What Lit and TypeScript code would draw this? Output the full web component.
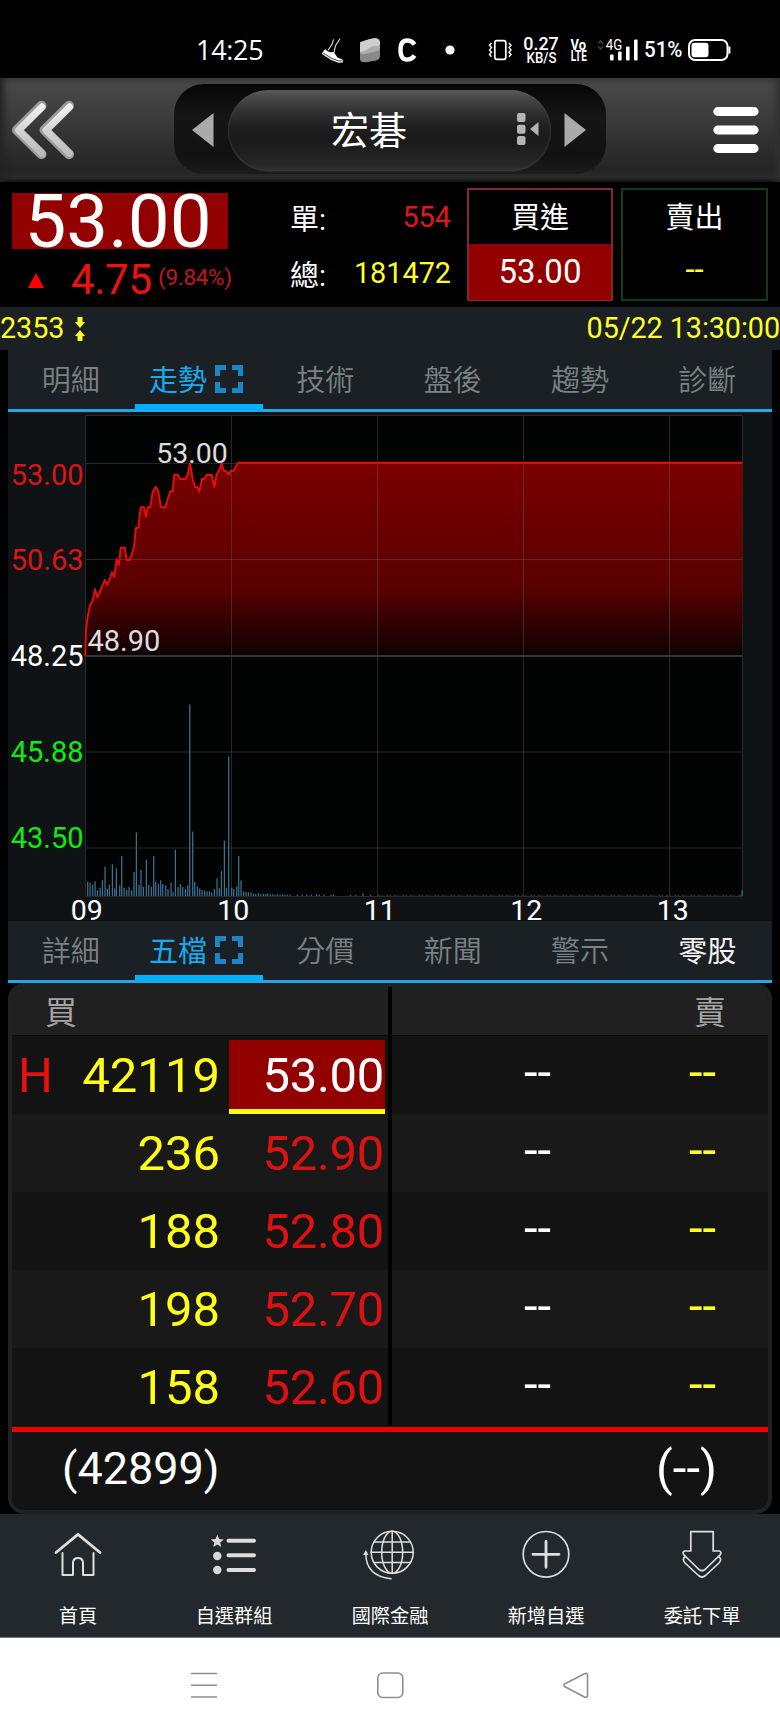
import { LitElement, html, svg, css } from "lit";
import { customElement, property } from "lit/decorators.js";
import { classMap } from "lit/directives/class-map.js";

const FONT = css`Roboto, "Noto Sans CJK TC", sans-serif`;

/* Intraday price line: [x, y] in thirds of a pixel from the plot corner. */
const PRICE: number[][] = [
  [256, 738], [258, 660], [263, 620], [270, 585], [278, 572], [285, 537], [292, 562], [298, 550],
  [306, 530], [314, 510], [322, 525], [330, 505], [336, 487], [343, 500], [350, 447], [357, 465],
  [362, 413], [374, 413], [380, 450], [388, 450], [396, 432], [402, 410], [408, 353], [415, 353],
  [422, 292], [432, 292], [438, 320], [443, 292], [451, 292], [458, 245], [467, 230], [475, 245],
  [483, 292], [496, 292], [505, 262], [511, 244], [518, 244], [523, 194], [533, 194], [541, 207],
  [556, 207], [563, 195], [570, 160], [578, 207], [585, 232], [593, 232], [598, 245], [606, 207],
  [613, 207], [620, 194], [635, 194], [643, 230], [650, 194], [657, 180], [665, 160], [671, 182],
  [680, 185], [686, 194], [692, 182], [701, 182], [714, 158.5], [2227, 158.5],
];

/* Volume bars: [x, top] in thirds of a pixel, baseline at 677. */
const VOLUME: number[][] = [
  [53, 634], [60, 637], [68, 643], [75, 633], [82, 660], [90, 652], [97, 630], [105, 589], [112, 656],
  [118, 643], [127, 582], [134, 654], [139, 594], [149, 645], [155, 557], [162, 652], [170, 659],
  [177, 650], [185, 660], [192, 605], [199, 486], [207, 643], [213, 598], [220, 650], [229, 568],
  [236, 643], [244, 650], [251, 557], [257, 635], [265, 641], [272, 630], [278, 641], [287, 645],
  [294, 656], [303, 637], [309, 666], [316, 538], [324, 650], [331, 641], [338, 650], [346, 656],
  [353, 645], [359, 102], [368, 484], [374, 635], [382, 648], [389, 654], [396, 659], [404, 660],
  [411, 663], [418, 663], [425, 666], [433, 656], [441, 624], [448, 654], [454, 602], [463, 511],
  [469, 652], [476, 258], [485, 652], [491, 656], [500, 648], [506, 557], [513, 630], [521, 663],
  [528, 665], [535, 666], [543, 666], [550, 671], [557, 671], [565, 669], [572, 672], [580, 671],
  [587, 671], [593, 669], [601, 672], [608, 672], [615, 673], [622, 672], [630, 673], [638, 672],
  [645, 673], [652, 673], [660, 673], [682, 673], [696, 673], [710, 673], [724, 673], [740, 672],
  [748, 673], [762, 673], [783, 673], [790, 673], [842, 674], [857, 674], [879, 669], [901, 674],
  [2016, 660],
];

@customElement("status-bar")
class StatusBar extends LitElement {
  static styles = css`
    :host { display: flex; align-items: center; height: 78px; padding: 22px 0 0 196px; box-sizing: border-box; background: #000; color: #fff; font-family: ${FONT}; }
    .time { font: 27px "Open Sans", "Noto Sans", sans-serif; line-height: 56px; width: 122px; letter-spacing: -0.3px; white-space: nowrap; }
    svg { display: block; flex: none; }
    text { font-family: Roboto, sans-serif; fill: #fff; }
  `;
  render() {
    return html`
      <span class="time">14:25</span>
      <svg width="462" height="56" viewBox="318 22 462 56">
        <path d="M333.500 39.300l-1.500 5-4 6M340 38.700l-4.500 7-1.500 7" fill="none" stroke="#ddd" stroke-width="1.100"/>
        <path d="M325 49.300l3 2.200q3 1.500 5.500.2l4 5.800 5 2q1.500 2 0 2.200l-4.500.1-6.500-2.800-9.300-6Z" fill="#fff"/>
        <path d="M322.300 53.500L331 59.300l7.500 2.800 4.300-.3" fill="none" stroke="#fff" stroke-width="1.200"/>
        <path d="M323.300 53L331.500 58.300l7 2.600 4-.2" fill="none" stroke="#000" stroke-width=".7"/>
        <path d="M360 52l20-5v9q0 3.500-4 4.500l-10 1.800q-6 .5-6-3.500Z" fill="#898989"/>
        <path d="M360 43.500q0-2 3-2.600l10-2.700q6-1.200 7 3.300v6q0 2.500-3 3.500l-12 3q-5 .8-5-2.500Z" fill="#adadad"/>
        <path d="M360 42.500l10-3.500q9-2 10 4-.5 3-3 3-4-.8-8 2-4 4-9 4Z" fill="#cfcfcf"/>
        <path d="M414.500 44.500Q412 40.500 407 40.500Q400.500 40.500 400.500 50T407 59.600Q412 59.600 414.500 55.500" fill="none" stroke="#fff" stroke-width="4.400"/>
        <circle cx="450" cy="50" r="4.600" fill="#fff"/>
        <g fill="none" stroke="#fff" stroke-width="1.700">
          <rect x="494.800" y="40.700" width="11" height="18.600" rx="2"/>
          <path d="M491.500 43l-2 2.300 2 2.300-2 2.300 2 2.300-2 2.300 2 2.300M509 43l2 2.300-2 2.300 2 2.300-2 2.300 2 2.300-2 2.300" stroke-width="1.400"/>
        </g>
        <text x="523.300" y="50" font-size="18" font-weight="500" textLength="35.500" lengthAdjust="spacingAndGlyphs">0.27</text>
        <text x="526.500" y="62.700" font-size="13.800" font-weight="500" textLength="30" lengthAdjust="spacingAndGlyphs">KB/S</text>
        <text x="570.500" y="49.500" font-size="13.800" font-weight="700" textLength="15.500" lengthAdjust="spacingAndGlyphs">Vo</text>
        <text x="570.800" y="60.800" font-size="14" font-weight="700" textLength="16" lengthAdjust="spacingAndGlyphs">LTE</text>
        <path d="M598 43.500l2.500-2.500 2.500 2.500M598 46.500l2.500 2.500 2.500-2.500" fill="none" stroke="#444" stroke-width="1.500"/>
        <text x="605.700" y="49.700" font-size="14.500" textLength="16.500" lengthAdjust="spacingAndGlyphs">4G</text>
        <g fill="#fff"><rect x="610" y="54.500" width="3.600" height="6" rx="1"/><rect x="618" y="51.500" width="3.600" height="9" rx="1"/><rect x="626" y="46.500" width="3.600" height="14" rx="1"/><rect x="634" y="39.500" width="3.600" height="21" rx="1"/></g>
        <text x="644" y="57" font-size="21.500" font-weight="500" textLength="38.500" lengthAdjust="spacingAndGlyphs">51%</text>
        <rect x="689" y="40" width="38.500" height="20" rx="6" fill="none" stroke="#fff" stroke-width="2"/>
        <rect x="691.500" y="42.700" width="17" height="14.600" rx="3" fill="#fff"/>
        <path d="M729.400 46.500v7" stroke="#fff" stroke-width="2"/>
      </svg>`;
  }
}

@customElement("title-bar")
class TitleBar extends LitElement {
  static styles = css`
    :host { display: flex; align-items: center; height: 104px; box-sizing: border-box; padding: 0 21px 0 9px; background: linear-gradient(#3a3a3a, #474747 7%, #3b3b3b 40%, #242424 88%, #2a2a2a 96%, #141414); box-shadow: inset 10px 0 6px -6px #242424, inset -10px 0 6px -6px #303030; }
    svg { display: block; flex: none; }
    .well { display: flex; align-items: center; justify-content: space-between; box-sizing: border-box; width: 433px; height: 90px; margin: 0 107px 3px 97px; padding: 3px 20px 0 18px; border-radius: 30px; background: linear-gradient(#050505, #151515 35%, #121212 80%, #1c1c1c); }
    .pill { display: grid; grid-template-columns: 1fr 32px; align-items: center; box-sizing: border-box; width: 323px; margin-left: 1px; height: 81px; border-radius: 41px; background: linear-gradient(#5d5d5d, #4a4a4a 8%, #303030 28%, #1d1d1d 48%, #1a1a1a 62%, #272727 92%, #303030); box-shadow: inset 0 0 2px #555, 0 1px 1px #292929; padding: 0 3px 0 0; }
    .name { color: #fff; font: 38px/52px "Noto Sans CJK TC", sans-serif; text-align: center; padding: 0 6px 4px 0; }
  `;
  render() {
    return html`
      <svg width="68" height="62" viewBox="9 99 68 62">
        <defs><linearGradient id="m" x1="0" y1="0" x2="0" y2="1"><stop offset="0" stop-color="#f0f0f0"/><stop offset="1" stop-color="#bbb"/></linearGradient></defs>
        <g fill="none" stroke-linecap="round" stroke-linejoin="round">
          <path d="M41.500 105.700L17 130l24.500 24.300M69 105.700L44.500 130 69 154.300" stroke="#999" stroke-width="10"/>
          <path d="M42 107L18.500 130.200 42 153.500M69.500 107L46 130.200 69.500 153.500" stroke="url(#m)" stroke-width="7"/>
        </g>
      </svg>
      <div class="well">
        <svg width="22" height="36" viewBox="0 0 22 36"><path d="M21.500 1v34L0 18Z" fill="#aaa"/></svg>
        <div class="pill">
          <span class="name">宏碁</span>
          <svg width="24" height="34" viewBox="0 0 24 34" fill="#b4b4b4">
            <rect x="1" y="0" width="8.500" height="9" rx="2"/><rect x="1" y="11.700" width="8.500" height="9" rx="2"/><rect x="1" y="23" width="8.500" height="9" rx="2"/>
            <path d="M22.500 9v14L14 16Z"/>
          </svg>
        </div>
        <svg width="22" height="36" viewBox="0 0 22 36"><path d="M.5 1v34L22 18Z" fill="#aaa"/></svg>
      </div>
      <svg width="46" height="50" viewBox="713.500 105 46 50"><path d="M718.200 111.500h36.500M718.200 130h36.500M718.200 148.500h36.500" stroke="#fff" stroke-width="8.800" stroke-linecap="round"/></svg>`;
  }
}

@customElement("quote-panel")
class QuotePanel extends LitElement {
  static styles = css`
    :host { display: block; background: #000; font-family: ${FONT}; color: #fff; }
    .quote { display: grid; grid-template-columns: 216px 161px 146px 147px; column-gap: 0; height: 125px; box-sizing: border-box; padding: 6px 12px 6px 12px; }
    .last { margin-top: 5px; height: 56px; line-height: 57px; background: #930000; font-size: 74.5px; text-align: center; white-space: nowrap; padding-right: 4px; box-sizing: border-box; }
    .change { display: flex; align-items: center; color: #f01010; height: 54px; line-height: 44px; padding-top: 8px; box-sizing: border-box; white-space: nowrap; }
    .change > * { flex: none; }
    .tri { font-size: 0; line-height: 0; width: 59px; padding: 0 0 0 16px; box-sizing: border-box; }
    .amount { font-size: 42px; width: 87px; letter-spacing: -0.3px; }
    .pct { font-size: 22.500px; color: #c01818; letter-spacing: -0.3px; line-height: 24px; margin-top: -6px; }
    .sums { margin: 0 0 0 62px; display: grid; grid-template-rows: 57px 56px; width: 161px; }
    .sum { display: flex; justify-content: space-between; align-items: center; font-size: 29px; }
    .sum span { font-size: 28.800px; }
    .r { color: #e01818; } .y { color: #ffff28; }
    .box { box-sizing: border-box; width: 146px; height: 113px; border: 2px solid #7c2c2c; display: grid; grid-template-rows: 54px 1fr; text-align: center; font-size: 29px; line-height: 56px; margin-left: 78px; }
    .box b { font-weight: 400; font-size: 33px; background: #930000; }
    .box.sell { border-color: #143c14; margin-left: 86px; width: 147px; }
    .box.sell b { background: none; color: #ffff28; line-height: 52px; }
    .code { display: flex; align-items: center; height: 43px; background: #1b2024; font-size: 28.800px; color: #ffff28; line-height: 40px; }
    .code svg { margin: 0 auto 0 10px; }
    .code span { letter-spacing: -0.1px; padding-bottom: 2px; }
  `;
  render() {
    return html`
      <div class="quote">
        <div>
          <div class="last">53.00</div>
          <div class="change">
            <span class="tri"><svg width="16" height="15"><path d="M8 0L16 15H0Z" fill="#f00"/></svg></span>
            <span class="amount">4.75</span><span class="pct">(9.84%)</span>
          </div>
        </div>
        <div class="sums">
          <div class="sum">單:<span class="r">554</span></div>
          <div class="sum">總:<span class="y">181472</span></div>
        </div>
        <div class="box">買進<b>53.00</b></div>
        <div class="box sell">賣出<b>--</b></div>
      </div>
      <div class="code">
        <span>2353</span>
        <svg width="12" height="26" viewBox="0 0 12 26" fill="#ffff28"><path d="M3.500 1h5v5h2.500L6 12 1 6h2.500ZM3.500 25h5v-5h2.500L6 14 1 20h2.500Z"/></svg>
        <span>05/22 13:30:00</span>
      </div>`;
  }
}

@customElement("tab-strip")
class TabStrip extends LitElement {
  @property({ attribute: false }) tabs: string[] = [];
  @property({ type: Number }) active = 1;
  @property({ type: Number }) bright = -1;
  static styles = css`
    :host { display: grid; grid-template-columns: repeat(6, 1fr); height: 62px; margin: 0 8px; box-sizing: border-box; border-bottom: 3px solid #22a8e6; background: #1b2024; font-family: ${FONT}; font-size: 29px; }
    .tab { display: flex; justify-content: center; align-items: center; gap: 8px; height: 60px; box-sizing: border-box; border-bottom: 6px solid transparent; padding-right: 2px; color: #7b8285; font-weight: 350; }
    .tab.on { color: #19a9ef; border-color: #02b0ff; font-weight: 400; padding-right: 6px; }
    .tab.bright { color: #f4f4f4; font-weight: 400; }
    .label { line-height: 44px; padding-top: 7px; }
    svg { display: block; margin-top: 4px; }
  `;
  render() {
    return this.tabs.map((t, i) => html`
      <div class=${classMap({ tab: true, on: i === this.active, bright: i === this.bright })}>
        <span class="label">${t}</span>
        ${i === this.active ? html`<svg width="28" height="28"><path d="M2.500 11V2.500H11M17 2.500H25.500V11M25.500 17V25.500H17M11 25.500H2.500V17" fill="none" stroke="#1a86c8" stroke-width="5"/></svg>` : ""}
      </div>`);
  }
}

@customElement("trend-chart")
class TrendChart extends LitElement {
  static styles = css`
    :host { display: block; height: 509px; margin: 0 8px; background: #101316; }
    svg { display: block; overflow: visible; }
    text { font: 29px Roboto, sans-serif; }
    .axis { text-anchor: end; }
    .hour { font-size: 28.500px; fill: #fff; text-anchor: middle; }
    .note { font-size: 28.500px; fill: #ddd; }
    .low { font-size: 29px; }
  `;
  render() {
    const pts = PRICE.map(([x, y]) => `${(x / 3 - 8).toFixed(1)},${(y / 3 - 2).toFixed(1)}`);
    const axis: [string, number, string][] = [
      ["53.00", 72.8, "#dc1414"], ["50.63", 157.8, "#dc1414"], ["48.25", 253.5, "#fff"],
      ["45.88", 349.8, "#10ec10"], ["43.50", 435.8, "#10ec10"],
    ];
    return html`<svg width="764" height="509" viewBox="0 0 764 509">
      <defs><linearGradient id="f" x1="0" y1="0" x2="0" y2="1"><stop offset="0" stop-color="#7a0000"/><stop offset=".65" stop-color="#590000"/><stop offset="1" stop-color="#0c0202"/></linearGradient></defs>
      <rect x="77.500" y="3.500" width="657" height="481" fill="#020404" stroke="#28292a"/>
      <polygon points="${pts.join(" ")} 734.300,244 77.500,244" fill="url(#f)"/>
      <g stroke="#777" stroke-opacity=".3">
        ${[51.5, 147.5, 340, 436].map((y) => svg`<path d=${`M78 ${y}H734`}/>`)}
        ${[223.5, 369.5, 515.5, 661.5].map((x) => svg`<path d=${`M${x} 4V484`}/>`)}
      </g>
      <path d="M78 244H734" stroke="#40484e" stroke-width="1.600"/>
      <polyline points=${pts.join(" ")} fill="none" stroke="#ea0c0c" stroke-width="1.900" stroke-linejoin="round"/>
      ${VOLUME.map(([x, y]) => svg`<rect x=${(61.5 + x / 3).toFixed(1)} y=${(484 - (677 - y) / 3).toFixed(1)} width="1.100" height=${((677 - y) / 3).toFixed(1)} fill="#4080a5"/>`)}
      <path d="M370 483.500H734" stroke="#33464f" stroke-dasharray="1.500 2 1 4 2 1.500 1 3"/>
      ${axis.map(([t, y, c]) => svg`<text class="axis" x="75.500" y=${y} fill=${c}>${t}</text>`)}
      ${["09", "10", "11", "12", "13"].map((t, i) => svg`<text class="hour" x=${78.7 + i * 146.5} y="507.500">${t}</text>`)}
      <text class="note" x="148.300" y="51.300">53.00</text>
      <text class="note low" x="79.500" y="239">48.90</text>
    </svg>`;
  }
}

@customElement("order-book")
class OrderBook extends LitElement {
  static styles = css`
    :host { display: block; background: #000; font-family: ${FONT}; }
    .card { margin: 0 8px; border: 4px solid #212121; border-top-width: 0; border-radius: 16px; background: #131313; overflow: hidden; height: 531px; box-sizing: border-box; }
    .head, .row { display: grid; grid-template-columns: 35px 173px 168px 4px 225px 151px; align-items: center; }
    .head { height: 53px; background: #202020; color: #a5a5a5; font-size: 32px; border-bottom: 1px solid #0c0c0c; box-sizing: border-box; line-height: 44px; }
    .bid { grid-column: 1 / 4; padding: 8px 0 0 33px; }
    .ask { grid-column: 5 / 7; text-align: right; padding: 8px 42px 0 0; }
    .gap { background: #000; align-self: stretch; }
    .head .gap { margin-top: 4px; }
    .row { height: 78px; font-size: 49px; line-height: 76px; }
    .row:nth-child(odd) { background: #191919; }
    .h { color: #e81010; padding: 2px 0 0 6px; }
    .qty { color: #ffff18; text-align: right; padding-top: 2px; }
    .price { color: #dc1212; text-align: right; padding: 2px 4px 0 0; justify-self: end; width: 152px; letter-spacing: -0.3px; box-sizing: border-box; margin-right: 3px; }
    .price span { margin-right: -3px; }
    .price.hit { background: #930000; color: #fff; border-bottom: 5px solid #ffff10; height: 74px; padding-top: 0; line-height: 72px; align-self: end; width: 156px; }
    .d { color: #fff; padding-left: 132px; line-height: 70px; height: 74px; }
    .e { color: #ffff28; padding-left: 72px; line-height: 70px; height: 74px; }
    .total { border-top: 5px solid #f00000; margin-top: 1px; height: 83px; box-sizing: border-box; display: flex; justify-content: space-between; padding: 0 51px 0 50px; color: #fff; font-size: 45px; line-height: 74px; }
    .total .none { font-size: 49px; }
  `;
  render() {
    const rows = [["42119", "53.00"], ["236", "52.90"], ["188", "52.80"], ["198", "52.70"], ["158", "52.60"]];
    return html`<div class="card">
      <div class="head"><span class="bid">買</span><span class="gap"></span><span class="ask">賣</span></div>
      ${rows.map(([q, p], i) => html`<div class="row">
        <span class="h">${i === 0 ? "H" : ""}</span><span class="qty">${q}</span>
        <span class=${classMap({ price: true, hit: i === 0 })}><span>${p}</span></span>
        <span class="gap"></span><span class="d">--</span><span class="e">--</span>
      </div>`)}
      <div class="total"><span>(42899)</span><span class="none">(--)</span></div>
    </div>`;
  }
}

@customElement("bottom-nav")
class BottomNav extends LitElement {
  static styles = css`
    :host { display: grid; grid-template-columns: repeat(5, 1fr); height: 124px; background: #23282c; border-bottom: 1px solid #777; box-sizing: border-box; font: 19.200px/28px "Noto Sans CJK TC", sans-serif; color: #fff; }
    .item { display: flex; flex-direction: column; align-items: center; padding-top: 12px; gap: 19px; white-space: nowrap; }
    svg { display: block; fill: none; stroke: #dedede; stroke-width: 2; stroke-linejoin: round; stroke-linecap: round; }
    .solid { fill: #d8d8d8; stroke: none; }
    .thick { stroke-width: 4; }
    .thin { stroke-width: 1.500; }
  `;
  render() {
    const items = [
      ["首頁", svg`<path d="M8 26.500L30 8.300 52 26.500" stroke-width="2.800"/><path d="M14.500 27V49H25V36.500Q25.500 32 30 32T35 36.500V49H45.500V27"/>`],
      ["自選群組", svg`<path class="solid" d="M13.300 8.800l1.800 4.300 4.700.4-3.600 3 1.100 4.600-4-2.500-4 2.500 1.100-4.600-3.600-3 4.700-.4Z"/><circle class="solid" cx="13.300" cy="30" r="4.200"/><circle class="solid" cx="13.300" cy="44" r="4.200"/><path class="thick" d="M24.500 14.700H50M24.500 29.300H50M24.500 44H50"/>`],
      ["國際金融", svg`<g class="thin"><circle cx="32.200" cy="26.300" r="21"/><ellipse cx="32.200" cy="26.300" rx="10.500" ry="21"/><path d="M32.200 5.500v42M11 26.300h42.500M14 16h36.500M14 36.400h36.500M5.800 28Q6 50 31 52.800"/></g><path class="solid" d="M5.800 24l2.800 5H3Z"/>`],
      ["新增自選", svg`<circle cx="30" cy="28.300" r="22.800" stroke-width="1.700"/><path d="M30 15.300v26M17 28.300h26" stroke-width="2.800"/>`],
      ["委託下單", svg`<g stroke-width="1.700"><path d="M18.800 5.700H41.200V25H47.500Q50 26 48 29L33 43.500Q30 46 27 43.500L12 29Q10 26 12.500 25H18.800Z"/><path d="M13.500 30.500Q9.500 33 13 37L26.500 49.500Q30 52.500 33.500 49.500L47 37Q50.500 33 46.500 30.500"/></g>`],
    ];
    return items.map(([t, g]) => html`<div class="item"><svg width="60" height="56" viewBox="0 0 60 56">${g}</svg><span>${t}</span></div>`);
  }
}

@customElement("system-nav")
class SystemNav extends LitElement {
  static styles = css`
    :host { display: flex; justify-content: center; align-items: center; gap: 158px; height: 95px; padding-bottom: 1px; box-sizing: border-box; background: #fff; }
    svg { display: block; fill: none; stroke: #8e8e8e; stroke-width: 1.600; stroke-linejoin: round; }
  `;
  render() {
    return html`
      <svg width="28" height="28"><path d="M1 2.500H27M1 14.300H27M1 26H27"/></svg>
      <svg width="28" height="28"><rect x="1.800" y="2" width="25" height="24.500" rx="5"/></svg>
      <svg width="28" height="28"><path d="M2.500 13Q1 14.300 2.500 15.500L22.500 26Q25.500 27 25.500 24.500V4Q25.500 1.500 22.500 2.800Z"/></svg>`;
  }
}

@customElement("app-root")
class AppRoot extends LitElement {
  static styles = css`
    :host { display: block; width: 780px; height: 1733px; overflow: hidden; background: #000; }
  `;
  render() {
    return html`
      <status-bar></status-bar>
      <title-bar></title-bar>
      <quote-panel></quote-panel>
      <tab-strip .tabs=${["明細", "走勢", "技術", "盤後", "趨勢", "診斷"]}></tab-strip>
      <trend-chart></trend-chart>
      <tab-strip .tabs=${["詳細", "五檔", "分價", "新聞", "警示", "零股"]} .bright=${5}></tab-strip>
      <order-book></order-book>
      <bottom-nav></bottom-nav>
      <system-nav></system-nav>`;
  }
}
